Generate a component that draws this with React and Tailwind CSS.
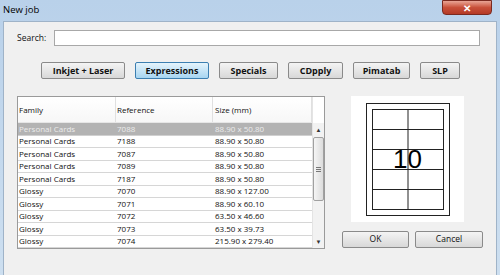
import React from "react";

const rows = [
	["Personal Cards", "7088", "88.90 x 50.80"],
	["Personal Cards", "7188", "88.90 x 50.80"],
	["Personal Cards", "7087", "88.90 x 50.80"],
	["Personal Cards", "7089", "88.90 x 50.80"],
	["Personal Cards", "7187", "88.90 x 50.80"],
	["Glossy", "7070", "88.90 x 127.00"],
	["Glossy", "7071", "88.90 x 60.10"],
	["Glossy", "7072", "63.50 x 46.60"],
	["Glossy", "7073", "63.50 x 39.73"],
	["Glossy", "7074", "215.90 x 279.40"],
];

const tabs = [
	["Inkjet + Laser", "w-[84px]"],
	["Expressions", "w-[74px]"],
	["Specials", "w-[59px]"],
	["CDpply", "w-[55px]"],
	["Pimatab", "w-[57px]"],
	["SLP", "w-[40px]"],
];

function Tab({ label, width, active }) {
	return (
		<button
			className={
				active
					? `${width} h-[17px] rounded-[2px] border border-[#3c7fb1] bg-gradient-to-b from-[#e5f4fc] to-[#a7d5f1] text-[9px] font-bold text-[#111]`
					: `${width} h-[17px] rounded-[2px] border border-[#8a8a8a] bg-gradient-to-b from-[#f4f4f4] to-[#d8d8d8] text-[9px] font-bold text-[#111]`
			}>
			{label}
		</button>
	);
}

function LabelSheet() {
	return (
		<svg width="84" height="113" viewBox="0 0 84 113">
			<rect x="0.5" y="0.5" width="83" height="112" fill="white" stroke="#222" />
			<rect x="6.5" y="6.5" width="71" height="100" fill="white" stroke="#222" />
			<line x1="42" y1="6.5" x2="42" y2="106.5" stroke="#222" />
			<line x1="6.5" y1="26.5" x2="77.5" y2="26.5" stroke="#222" />
			<line x1="6.5" y1="46.5" x2="77.5" y2="46.5" stroke="#222" />
			<line x1="6.5" y1="66.5" x2="77.5" y2="66.5" stroke="#222" />
			<line x1="6.5" y1="86.5" x2="77.5" y2="86.5" stroke="#222" />
		</svg>
	);
}

export default function App() {
	return (
		<div
			className="w-[500px] h-[275px] overflow-hidden bg-gradient-to-b from-[#b9d1ea] to-[#cddff0] relative text-[#111]"
			style={{ fontFamily: '"Open Sans", "Noto Sans", sans-serif' }}>
			{/* title bar */}
			<div className="h-[21px] flex items-center pl-[3px] text-[9.5px] text-black">
				New job
			</div>
			<button className="absolute top-0 right-[8px] w-[50px] h-[15px] rounded-b-[4px] border border-[#7a2a20] bg-gradient-to-b from-[#e8a495] via-[#c8503a] to-[#b43a26] flex items-center justify-center text-white text-[10px] font-bold leading-none">
				✕
			</button>

			{/* panel */}
			<div className="mx-[3px] h-[260px] bg-[#f0f0f0] border border-[#9fb3c8]">
				<div className="flex items-center mt-[8px] pl-[13px]">
					<span className="text-[8.5px] w-[37px]">Search:</span>
					<div className="w-[426px] h-[16px] bg-white border border-[#a8a8a8]" />
				</div>

				<div className="flex gap-[10px] mt-[16px] pl-[37px]">
					{tabs.map(([label, w], i) => (
						<Tab key={label} label={label} width={w} active={i === 1} />
					))}
				</div>

				<div className="flex mt-[17px] pl-[13px]">
					{/* table */}
					<div className="w-[308px] h-[153px] border border-[#9a9a9a] bg-white flex">
						<div className="w-[294px] text-[8px] leading-none">
							<div className="h-[26px] flex border-b border-[#e6e6e6] bg-gradient-to-b from-white to-[#f7f7f7]">
								<div className="w-[98px] border-r border-[#e0e0e0] pl-[1px] flex items-center">Family</div>
								<div className="w-[97px] border-r border-[#e0e0e0] pl-[1px] flex items-center">Reference</div>
								<div className="w-[99px] border-r border-[#e0e0e0] pl-[2px] flex items-center">Size (mm)</div>
							</div>
							{rows.map((r, i) => (
								<div
									key={r[1]}
									className={
										i === 0
											? "h-[12.5px] flex items-center bg-[#b3b3b3] text-[#ececec] border-b border-[#d0d0d0]"
											: "h-[12.5px] flex items-center border-b border-[#d6d6d6]"
									}>
									<div className="w-[98px] pl-[1px]">{r[0]}</div>
									<div className="w-[97px] pl-[1px]">{r[1]}</div>
									<div className="w-[99px] pl-[2px]">{r[2]}</div>
								</div>
							))}
						</div>
						{/* scrollbar */}
						<div className="w-[12px] flex flex-col border-l border-[#e4e4e4]">
							<div className="h-[26px] bg-white" />
							<div className="flex-1 bg-[#f2f2f2] flex flex-col items-center">
								<div className="h-[14px] text-[6px] flex items-center text-[#333]">▲</div>
								<div className="w-[11px] h-[64px] rounded-[2px] border border-[#a0a0a0] bg-gradient-to-r from-[#f5f5f5] to-[#dcdcdc] flex flex-col items-center justify-center gap-[1px]">
									<div className="w-[5px] h-px bg-[#777]" />
									<div className="w-[5px] h-px bg-[#777]" />
									<div className="w-[5px] h-px bg-[#777]" />
								</div>
								<div className="flex-1" />
								<div className="h-[12px] text-[6px] flex items-center text-[#333]">▼</div>
							</div>
						</div>
					</div>

					{/* preview + buttons */}
					<div className="ml-[26px] flex flex-col">
						<div className="w-[113px] h-[126px] bg-white flex items-center justify-center relative">
							<LabelSheet />
							<span
								className="absolute text-[26px] leading-none text-black"
								style={{ fontFamily: '"Liberation Sans", Arial, sans-serif' }}>
								10
							</span>
						</div>
						<div className="flex gap-[6px] mt-[9px] -ml-[9px]">
							<button className="w-[67px] h-[17px] rounded-[2px] border border-[#8a8a8a] bg-gradient-to-b from-[#f4f4f4] to-[#d8d8d8] text-[8.5px]">
								OK
							</button>
							<button className="w-[68px] h-[17px] rounded-[2px] border border-[#8a8a8a] bg-gradient-to-b from-[#f4f4f4] to-[#d8d8d8] text-[8.5px]">
								Cancel
							</button>
						</div>
					</div>
				</div>
			</div>
		</div>
	);
}
